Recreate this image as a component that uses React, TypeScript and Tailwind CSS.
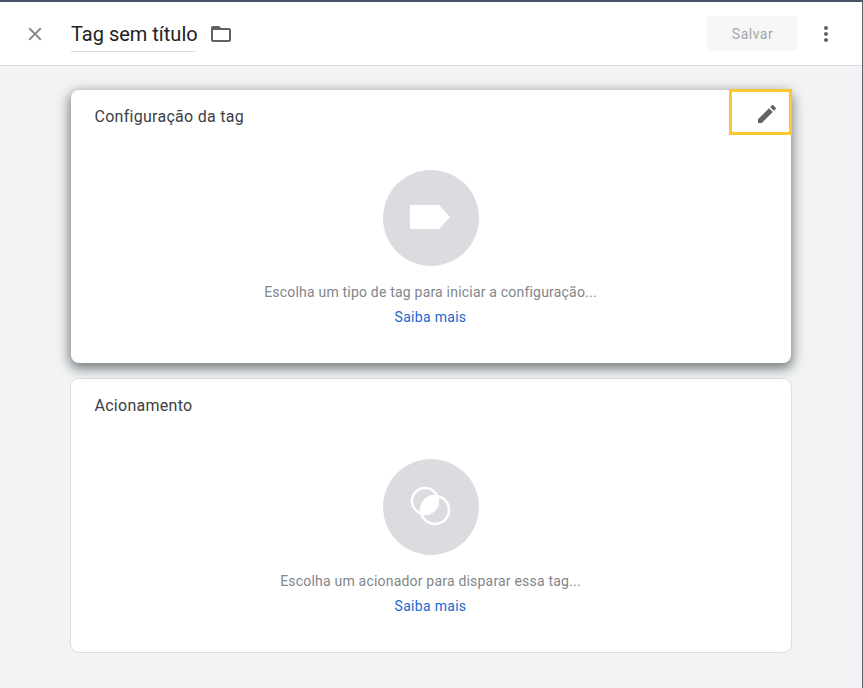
import React from 'react';

const font = { fontFamily: 'Roboto, sans-serif' };

const TagIcon = () => (
  <svg width="40" height="24" viewBox="0 0 40 24" fill="#fff" className="relative -left-[1px] -top-[1px]">
    <path d="M0 0H29L40 12L29 24H0Z" />
  </svg>
);

const TriggerIcon = () => (
  <svg width="48" height="48" viewBox="0 0 48 48" fill="none">
    <defs>
      <clipPath id="ring-a">
        <circle cx="18" cy="18" r="13.5" />
      </clipPath>
    </defs>
    <circle cx="28" cy="27" r="14" fill="#fff" clipPath="url(#ring-a)" />
    <circle cx="18" cy="18" r="13" stroke="#fff" strokeWidth="2.5" />
    <circle cx="28" cy="27" r="14" stroke="#fff" strokeWidth="2.5" />
  </svg>
);

const Section = ({
  title,
  text,
  icon,
  className,
  children,
}: {
  title: string;
  text: string;
  icon: React.ReactNode;
  className: string;
  children?: React.ReactNode;
}) => (
  <div className={`relative w-[720px] bg-white rounded-[8px] flex flex-col items-center ${className}`}>
    <div className="w-full px-6 pt-[15px] text-[16px] leading-[24px] tracking-[0.28px] text-[#3c4043]">{title}</div>
    <div className="mt-[41px] w-24 h-24 rounded-full bg-[#dadce0] flex items-center justify-center">{icon}</div>
    <div className="mt-[16px] text-[14px] leading-[20px] tracking-[0.2px] text-[#80868b]">{text}</div>
    <a className="mt-[5px] text-[14px] leading-[20px] tracking-[0.3px] text-[#1967d2]">Saiba mais</a>
    {children}
  </div>
);

export default function App() {
  return (
    <div
      className="w-[863px] h-[688px] overflow-hidden flex flex-col bg-[#f1f3f4] border-t-2 border-t-[#4a5468] border-r border-r-[#5f6368]"
      style={font}
    >
      <header className="h-[64px] shrink-0 bg-white border-b border-[#dadce0] flex items-center pl-[24px] pr-[24px]">
        <svg width="22" height="22" viewBox="0 0 24 24" fill="#80868b" className="shrink-0">
          <path d="M19 6.41 17.59 5 12 10.59 6.41 5 5 6.41 10.59 12 5 17.59 6.41 19 12 13.41 17.59 19 19 17.59 13.41 12z" />
        </svg>
        <div className="ml-[25px] mt-[1px] h-[35px] border-b border-[#dadce0] text-[20px] leading-[34px] text-[#202124] w-[125px] whitespace-nowrap">
          Tag sem título
        </div>
        <svg width="24" height="24" viewBox="0 0 24 24" fill="#5f6368" className="ml-[13px] shrink-0">
          <path d="M20 6h-8l-2-2H4c-1.1 0-1.99.9-1.99 2L2 18c0 1.1.9 2 2 2h16c1.1 0 2-.9 2-2V8c0-1.1-.9-2-2-2zm0 12H4V8h16v10z" />
        </svg>
        <div className="ml-auto w-[91px] h-[35px] pt-[2px] rounded-[4px] bg-[#f7f7f7] flex items-center justify-center text-[14px] tracking-[0.5px] text-[#a4a7ab]">
          Salvar
        </div>
        <svg width="24" height="24" viewBox="0 0 24 24" fill="#5f6368" className="ml-[16px] shrink-0">
          <path d="M12 8c1.1 0 2-.9 2-2s-.9-2-2-2-2 .9-2 2 .9 2 2 2zm0 2c-1.1 0-2 .9-2 2s.9 2 2 2 2-.9 2-2-.9-2-2-2zm0 6c-1.1 0-2 .9-2 2s.9 2 2 2 2-.9 2-2-.9-2-2-2z" />
        </svg>
      </header>

      <main className="flex-1 flex flex-col items-center pt-[24px] pr-[1px]">
        <Section
          title="Configuração da tag"
          text="Escolha um tipo de tag para iniciar a configuração..."
          icon={<TagIcon />}
          className="h-[273px] shadow-[0_4px_12px_2px_rgba(60,64,67,0.65)]"
        >
          <div className="absolute -top-[1px] -right-[1px] w-[63px] h-[46px] border-[3px] border-[#fbc92f] flex items-center justify-center">
            <svg width="24" height="24" viewBox="0 0 24 24" fill="#5f6368" className="relative left-[7px] top-[2px]">
              <path d="M3 17.25V21h3.75L17.81 9.94l-3.75-3.75L3 17.25zM20.71 7.04c.39-.39.39-1.02 0-1.41l-2.34-2.34c-.39-.39-1.02-.39-1.41 0l-1.83 1.83 3.75 3.75 1.83-1.83z" />
            </svg>
          </div>
        </Section>
        <Section
          title="Acionamento"
          text="Escolha um acionador para disparar essa tag..."
          icon={<TriggerIcon />}
          className="mt-[16px] h-[273px] shadow-[0_0_0_1px_#dadce0]"
        />
      </main>
    </div>
  );
}
